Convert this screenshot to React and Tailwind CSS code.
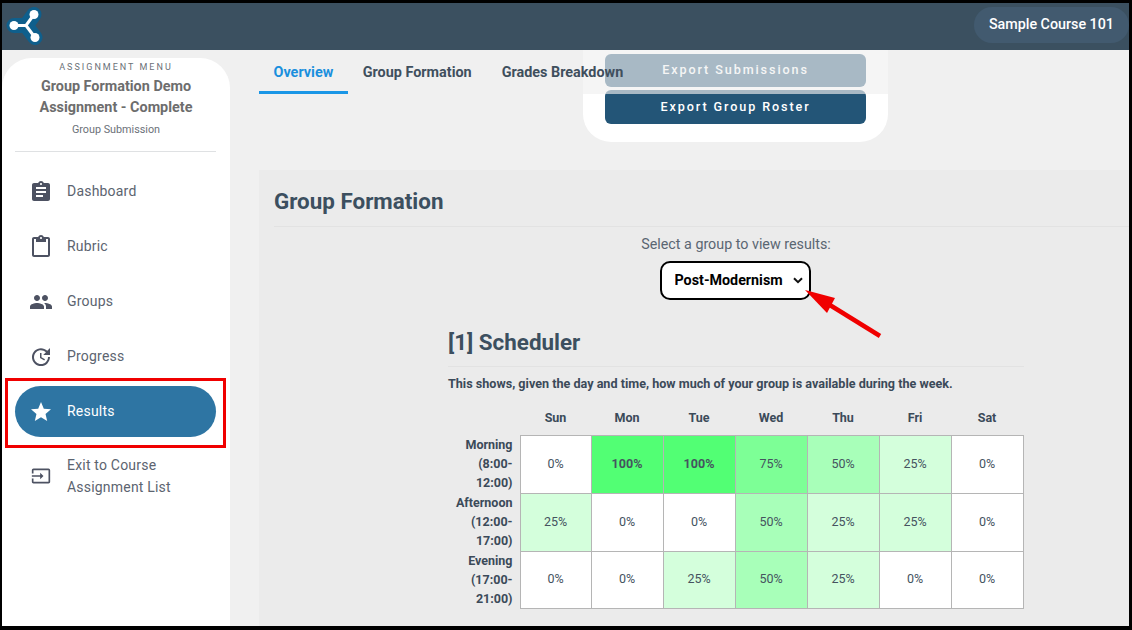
import React from "react";
import { MdAssignment, MdContentPaste, MdPeople, MdUpdate, MdStar, MdInput } from "react-icons/md";

const navItems = [
  { label: "Dashboard", icon: MdAssignment },
  { label: "Rubric", icon: MdContentPaste },
  { label: "Groups", icon: MdPeople },
  { label: "Progress", icon: MdUpdate },
  { label: "Results", icon: MdStar, active: true },
];

const days = ["Sun", "Mon", "Tue", "Wed", "Thu", "Fri", "Sat"];

const schedule = [
  { label: ["Morning", "(8:00-", "12:00)"], values: [0, 100, 100, 75, 50, 25, 0], height: "h-[58px]" },
  { label: ["Afternoon", "(12:00-", "17:00)"], values: [25, 0, 0, 50, 25, 25, 0], height: "h-[58px]" },
  { label: ["Evening", "(17:00-", "21:00)"], values: [0, 0, 25, 50, 25, 0, 0], height: "h-[57px]" },
];

const cellColors = {
  0: "bg-white",
  25: "bg-[#d4ffdc]",
  50: "bg-[#a8ffb9]",
  75: "bg-[#7dff96]",
  100: "bg-[#52ff74] font-bold",
};

function Logo() {
  return (
    <svg width="40" height="44" viewBox="0 0 40 44" fill="none" className="overflow-visible">
      <path d="M7 20.500H19L27 9.500M19 20.500L28 32.500" stroke="#0f5f8c" strokeWidth="15" strokeLinecap="round" strokeLinejoin="round" />
      <path d="M7 20.500H19L27 9.500M19 20.500L28 32.500" stroke="#ffffff" strokeWidth="3" />
      <circle cx="7" cy="20.500" r="4.500" fill="#ffffff" />
      <circle cx="27" cy="9.500" r="4.500" fill="#ffffff" />
      <circle cx="28" cy="32.500" r="4.500" fill="#ffffff" />
    </svg>
  );
}

function Sidebar() {
  return (
    <aside className="w-[228px] shrink-0 mt-2 bg-white rounded-t-[30px] text-[#5c6470]">
      <div className="text-center pt-[3px] h-[93px]">
        <div className="text-[9px] leading-[13px] tracking-[2px] text-[#6b7178]">ASSIGNMENT MENU</div>
        <div className="mt-[2px] text-[14.400px] leading-[21px] font-bold text-[#6d6d6d]">
          Group Formation Demo
          <br />
          Assignment - Complete
        </div>
        <div className="mt-[5px] text-[10.800px] leading-[14px] text-[#6b7178]">Group Submission</div>
      </div>
      <div className="ml-[13px] mr-[14px] border-b border-[#dfe1e3]" />
      <nav className="mt-[14px] pl-[13px] pr-[14px] flex flex-col gap-1">
        {navItems.map((item) => {
          const Icon = item.icon;
          return (
            <div
              key={item.label}
              className={
                item.active
                  ? "h-[51px] flex items-center rounded-full bg-[#2e75a3] text-white"
                  : "h-[51px] flex items-center"
              }
            >
              <div className="w-[52px] flex justify-center">
                <Icon size={24} className={item.active ? "text-white" : "text-[#4d5262]"} />
              </div>
              <span className="text-[14px] tracking-[0.2px]">{item.label}</span>
            </div>
          );
        })}
        <div className="h-[70px] flex items-center">
          <div className="w-[52px] flex justify-center">
            <MdInput size={20} className="text-[#4d5262]" />
          </div>
          <span className="text-[14px] leading-[22px] tracking-[0.2px]">
            Exit to Course
            <br />
            Assignment List
          </span>
        </div>
      </nav>
    </aside>
  );
}

function Tabs() {
  return (
    <div className="relative z-10 h-[44px] ml-[29px] flex items-stretch text-[14.400px] font-bold text-[#3f4f5d]">
      <div className="px-[14.500px] flex items-center text-[#1a8fdd] border-b-[3px] border-[#1a96e6] pt-[5px]">Overview</div>
      <div className="px-[15px] pt-[2px] flex items-center">Group Formation</div>
      <div className="px-[15px] pt-[2px] flex items-center">Grades Breakdown</div>
    </div>
  );
}

function Scheduler() {
  return (
    <div className="w-[576px] mx-auto mt-[26px] text-[#3b4a59]">
      <h3 className="text-[22.400px] leading-[32px] font-bold text-[#3c4f5f] pb-[8px] border-b border-[#e2e2e2]">
        [1] Scheduler
      </h3>
      <p className="mt-[9px] text-[12.600px] leading-[16px] font-bold">
        This shows, given the day and time, how much of your group is available during the week.
      </p>
      <table className="mt-[9px] ml-[2px] border-collapse table-fixed text-[12.500px] w-[573px]">
        <thead>
          <tr className="h-[34px]">
            <th className="w-[70px]" />
            {days.map((day) => (
              <th key={day} className={day === "Sun" ? "w-[71px] pt-[2px] font-bold" : "w-[72px] pt-[2px] font-bold"}>
                {day}
              </th>
            ))}
          </tr>
        </thead>
        <tbody>
          {schedule.map((row) => (
            <tr key={row.label[0]} className={row.height}>
              <th className="pr-[7px] align-top text-right font-bold leading-[19px]">
                {row.label.map((line) => (
                  <div key={line}>{line}</div>
                ))}
              </th>
              {row.values.map((value, i) => (
                <td key={i} className={`border border-[#b5b5b5] text-center text-[#45535f] ${cellColors[value]}`}>
                  {value}%
                </td>
              ))}
            </tr>
          ))}
        </tbody>
      </table>
    </div>
  );
}

export default function App() {
  return (
    <div
      className="relative w-[1132px] h-[630px] overflow-hidden border-black border-t-[3px] border-l-2 border-r-[3px] border-b-4 bg-[#f0f0f0] flex flex-col"
      style={{ fontFamily: "Roboto, sans-serif" }}
    >
      <header className="h-[47px] shrink-0 bg-[#3b5060] flex items-center justify-between pl-[5px]">
        <Logo />
        <div className="h-[36px] mb-[3px] px-[15px] flex items-center rounded-full bg-[#425a6f] text-white text-[14.300px] font-medium">
          Sample Course 101
        </div>
      </header>

      <div className="flex-1 flex min-h-0">
        <Sidebar />

        <main className="relative flex-1 min-w-0 overflow-hidden">
          {/* export popover sits behind the translucent tab strip */}
          <div className="absolute left-[353px] top-0 w-[305px] h-[92px] bg-white rounded-b-[28px] px-[22px] pt-[4px] flex flex-col gap-[3px]">
            <button className="h-[33px] rounded-[6px] bg-[#235577] text-white text-[12.600px] font-medium tracking-[1.900px]">
              Export Submissions
            </button>
            <button className="h-[34px] rounded-[6px] bg-[#235577] text-white text-[12.600px] font-medium tracking-[1.900px]">
              Export Group Roster
            </button>
          </div>
          <div className="absolute left-0 right-0 top-0 h-[44px] bg-[#f0f0f0]/65" />

          <Tabs />

          <section className="relative mt-[76px] ml-[29px] w-[954px] h-[500px] bg-[#ebebeb]">
            <h2 className="ml-[15px] pt-[7px] h-[57px] flex items-center text-[22.400px] font-bold text-[#3c4f5f] border-b border-[#e2e2e2]">
              Group Formation
            </h2>
            <div className="mt-[7px] text-center text-[14.300px] leading-[20px] text-[#5a6672]">
              Select a group to view results:
            </div>
            <div className="mt-[7px] flex justify-center">
              <div className="relative -translate-x-[1px]">
                <select className="appearance-none block w-[151px] h-[39px] pl-[13px] rounded-[10px] border-2 border-black bg-white text-[14.300px] font-bold text-black">
                  <option>Post-Modernism</option>
                </select>
                <svg className="absolute right-[8px] top-[16px] pointer-events-none" width="10" height="7" viewBox="0 0 10 7" fill="none">
                  <path d="M1 1.200L5 5.200L9 1.200" stroke="#111111" strokeWidth="2" />
                </svg>
              </div>
            </div>
            <Scheduler />
          </section>
        </main>
      </div>

      {/* annotations drawn over the screenshot */}
      <div className="absolute left-[3px] top-[375px] w-[221px] h-[70px] border-[3px] border-[#f00000]" />
      <svg className="absolute left-[798px] top-[280px]" width="90" height="60" viewBox="0 0 90 60" fill="none">
        <path d="M80 53L25 19" stroke="#f00000" strokeWidth="4.500" />
        <path d="M5 7L35 15L27 30Z" fill="#f00000" />
      </svg>
    </div>
  );
}
